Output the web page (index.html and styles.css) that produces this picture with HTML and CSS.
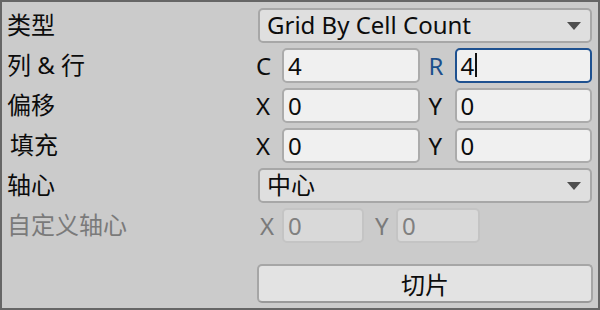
FILE: index.html
```html
<!DOCTYPE html>
<html lang="zh">
<head>
    <meta charset="UTF-8">
    <title>切片</title>
    <link rel="stylesheet" href="styles.css">
</head>
<body>
    <div class="panel">
        <div class="row">
            <span class="label">类型</span>
            <div class="popup">
                <span class="popup-text">Grid By Cell Count</span>
                <span class="arrow"></span>
            </div>
        </div>

        <div class="row">
            <span class="label">列 &amp; 行</span>
            <div class="pair">
                <div class="field">
                    <span class="axis">C</span>
                    <span class="input">4</span>
                </div>
                <div class="field">
                    <span class="axis axis-focus">R</span>
                    <span class="input input-focus">4<span class="caret"></span></span>
                </div>
            </div>
        </div>

        <div class="row">
            <span class="label">偏移</span>
            <div class="pair">
                <div class="field">
                    <span class="axis">X</span>
                    <span class="input">0</span>
                </div>
                <div class="field">
                    <span class="axis">Y</span>
                    <span class="input">0</span>
                </div>
            </div>
        </div>

        <div class="row">
            <span class="label label-pad">填充</span>
            <div class="pair">
                <div class="field">
                    <span class="axis">X</span>
                    <span class="input">0</span>
                </div>
                <div class="field">
                    <span class="axis">Y</span>
                    <span class="input">0</span>
                </div>
            </div>
        </div>

        <div class="row">
            <span class="label">轴心</span>
            <div class="popup">
                <span class="popup-text zh">中心</span>
                <span class="arrow"></span>
            </div>
        </div>

        <div class="row row-disabled">
            <span class="label">自定义轴心</span>
            <div class="small-pair">
                <span class="axis">X</span>
                <span class="input input-x">0</span>
                <span class="axis axis-y">Y</span>
                <span class="input input-y">0</span>
            </div>
        </div>

        <div class="row row-button">
            <span></span>
            <button class="slice-btn">切片</button>
        </div>
    </div>
</body>
</html>
```

FILE: styles.css
```css
body {
    margin: 0;
    font-family: "Noto Sans", "Noto Sans CJK SC", sans-serif;
    font-size: 24px;
    color: #0c0c0c;
}
.panel {
    width: 600px;
    height: 310px;
    box-sizing: border-box;
    border: 2px solid #666666;
    background-color: #cbcbcb;
    padding: 6px 6px 0 4px;
}
.row {
    display: grid;
    grid-template-columns: 250px 1fr;
    align-items: center;
    height: 40px;
}
.row:first-child {
    margin-top: -3px;
}
.label {
    white-space: pre;
    line-height: 1;
    padding-left: 1px;
}
.label-pad {
    padding-left: 4px;
}
.popup {
    height: 35px;
    box-sizing: border-box;
    margin-left: 2px;
    border: 2px solid #a7a7a7;
    border-radius: 5px;
    background-color: #dfdfdf;
    display: flex;
    align-items: center;
    justify-content: space-between;
    padding: 0 9px 0 7px;
}
.popup-text {
    line-height: 1;
}
.arrow {
    width: 0;
    height: 0;
    border-left: 7px solid transparent;
    border-right: 7px solid transparent;
    border-top: 8px solid #4e4e4e;
    margin-top: 2px;
}
.pair {
    display: grid;
    grid-template-columns: 1fr 1fr;
    gap: 9px;
}
.field {
    display: flex;
    align-items: center;
}
.axis {
    width: 26px;
    flex: none;
}
.axis-focus {
    color: #1c4f8c;
}
.input {
    flex: 1;
    height: 35px;
    box-sizing: border-box;
    border: 2px solid #ababab;
    border-radius: 5px;
    background-color: #f0f0f0;
    padding-left: 4px;
    display: flex;
    align-items: center;
}
.input-focus {
    border-color: #1e5190;
}
.caret {
    display: inline-block;
    width: 2px;
    height: 24px;
    background-color: #111;
    margin-left: 1px;
}
.row-disabled {
    color: #7a7a7a;
}
.row-disabled .input {
    background-color: #d9d9d9;
    border-color: #c4c4c4;
    color: #808080;
    flex: none;
}
.small-pair {
    display: flex;
    align-items: center;
}
.row-disabled .axis {
    width: 22px;
    padding-left: 4px;
}
.input-x {
    width: 82px;
}
.input-y {
    width: 84px;
}
.row-disabled .axis-y {
    width: 21px;
    padding-left: 0;
    margin-left: 11px;
}
.row-button {
    margin-top: 17px;
    height: 42px;
}
.slice-btn {
    height: 39px;
    margin-left: 1px;
    margin-right: -1px;
    font-family: inherit;
    font-size: 24px;
    color: #0c0c0c;
    background-color: #e3e3e3;
    border: 2px solid #a6a6a6;
    border-bottom-color: #999999;
    border-radius: 5px;
    padding: 0;
}
```
